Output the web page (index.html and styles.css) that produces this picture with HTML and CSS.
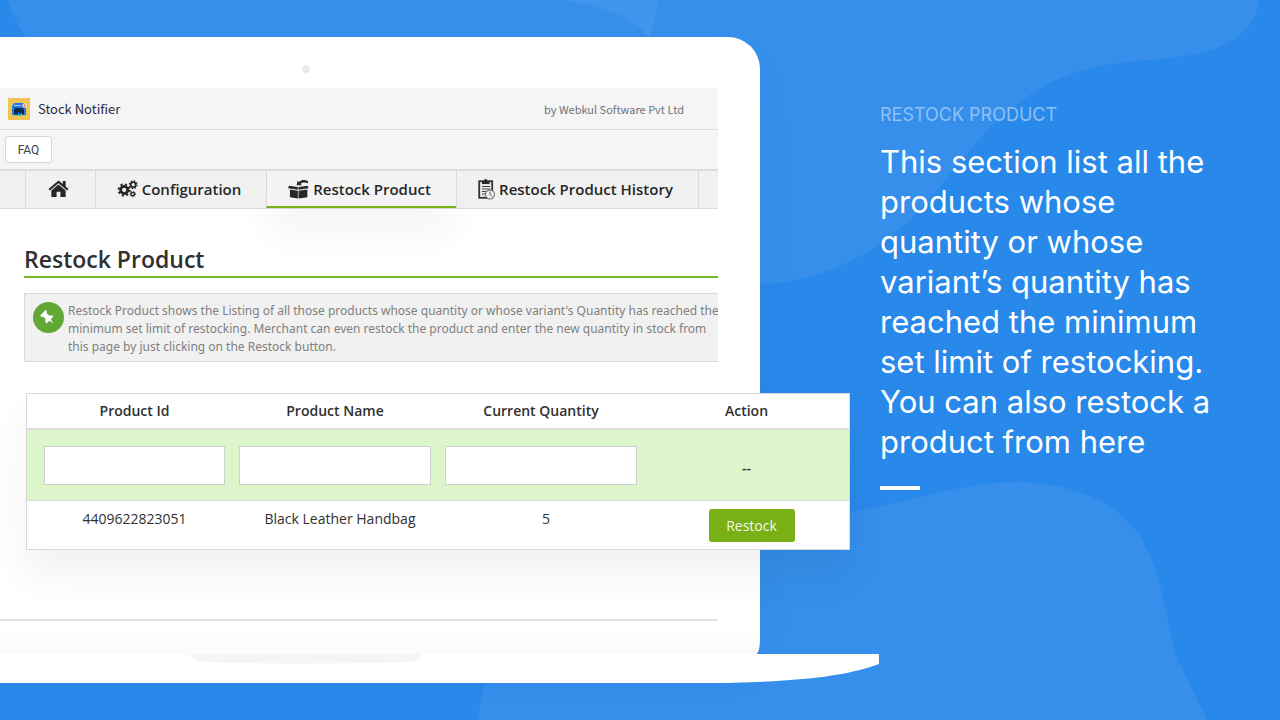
FILE: index.html
```html
<!DOCTYPE html>
<html lang="en">
<head>
<meta charset="utf-8">
<meta name="viewport" content="width=device-width, initial-scale=1">
<title>Stock Notifier – Restock Product</title>
<link rel="stylesheet" href="styles.css">
</head>
<body>
<div class="page">
  <svg class="backdrop" viewBox="0 0 1280 720" preserveAspectRatio="none" aria-hidden="true">
    <path class="blob" d="M8 0C14 16 20 28 28 44H646C654 28 657 12 657 0Z"/>
    <path class="blob" d="M565 0C605 8 635 16 648 37L700 285H760C828 279 884 252 926 203C968 154 1010 88 1090 68C1140 57 1190 62 1226 44C1252 29 1258 14 1259 0Z"/>
    <path class="blob" d="M478 720C480 702 483 688 488 670L700 530C850 520 900 500 960 488C1030 474 1100 485 1135 530C1164 568 1165 622 1178 660L1207 720Z"/>
  </svg>

  <main class="laptop">
    <div class="lid">
      <span class="camera"></span>
      <div class="app">
        <header class="app-header">
          <svg class="logo" viewBox="0 0 22 22" aria-hidden="true">
            <rect width="22" height="22" fill="#f0c452"/>
            <path d="M4 8L6.500 5H15.500L18 8V17H4Z" fill="#1f78ee"/>
            <path d="M6 17V12Q6 10 8 10H14Q16 10 16 12V17H14V15H12V17H11V14H10V17Z" fill="#10263f"/>
            <path d="M6 17H17" stroke="#25b8c8" stroke-width="1"/>
            <path d="M6 7.500H13" stroke="#9cc8ff" stroke-width="1"/>
            <circle cx="16.500" cy="7.500" r="2.200" fill="#f8dedb"/>
            <circle cx="16.500" cy="7.500" r="1" fill="#ea5959"/>
          </svg>
          <span class="app-name">Stock Notifier</span>
          <span class="vendor">by Webkul Software Pvt Ltd</span>
        </header>
        <div class="toolbar"><button class="faq" type="button">FAQ</button></div>
        <nav class="tabs">
          <a class="tab tab-home" href="#" aria-label="Home">
            <svg class="icon-home" viewBox="0 0 22 20"><path d="M11 1L0.500 10L2 11.600L11 4L20 11.600L21.500 10L18.500 7.400V1.500H15.500V4.800Z"/><path d="M11 5.400L3.500 11.700V18.500H9V13H13V18.500H18.500V11.700Z"/></svg>
          </a>
          <a class="tab tab-config" href="#">
            <svg class="icon" viewBox="0 0 22 20"><g fill="none" stroke="#272727"><circle cx="7.500" cy="11" r="3.700" stroke-width="3"/><circle cx="7.500" cy="11" r="5.900" stroke-width="2" stroke-dasharray="2.300 2.330"/><circle cx="17" cy="5.500" r="2.600" stroke-width="1.800"/><circle cx="17" cy="5.500" r="4" stroke-width="1.300" stroke-dasharray="1.570 1.570"/><circle cx="16.500" cy="15.300" r="1.800" stroke-width="1.500"/><circle cx="16.500" cy="15.300" r="2.900" stroke-width="1" stroke-dasharray="1.140 1.140"/></g></svg>
            Configuration
          </a>
          <a class="tab tab-active" href="#">
            <svg class="icon" viewBox="0 0 22 20"><path d="M1 6.500L10.300 8V10.800L0 9.300ZM11 8L20.500 6.500L21.500 9.300L11 10.800ZM2 10.500L10.300 11.800V20L2 18.700ZM11 11.800L20.300 10.500V18.700L11 20Z"/><path d="M9 6L10 1.500L11.500 2.700C14 0 18 0 21 1.800V4C17.500 2.600 15 3 13.200 4.500L14.500 6Z"/></svg>
            Restock Product
          </a>
          <a class="tab tab-history" href="#">
            <svg class="icon icon-clip" viewBox="0 0 17 22"><rect x="1.200" y="3.200" width="13" height="16.600" fill="#e8e8e8" stroke="#333" stroke-width="1.800"/><path d="M4 3.200H6Q6 1 7.700 1T9.500 3.200H11.500V6H4Z"/><path d="M4 8.500H12M4 11H12M4 13.500H9M4 16H8" stroke="#444" stroke-width="1"/><circle cx="12" cy="16.500" r="4.500" fill="#f4f4f4" stroke="#555" stroke-width="1"/><path d="M12 13.500V16.500L14 18.500" fill="none" stroke="#444" stroke-width="1"/></svg>
            Restock Product History
          </a>
        </nav>
        <section class="content">
          <h1 class="title">Restock Product</h1>
          <div class="notice">
            <svg class="pin" viewBox="0 0 32 32" aria-hidden="true"><circle cx="16" cy="16" r="16" fill="#62a834"/><path transform="translate(15.500 16.500) rotate(-45)" d="M-4 -7.500H4V-5.500L2.600 -4.800V-1L5 1V3H1L0 8L-1 3H-5V1L-2.600 -1V-4.800L-4 -5.500Z" fill="#fff"/></svg>
            <p class="notice-text">Restock Product shows the Listing of all those products whose quantity or whose variant's Quantity has reached the<br>minimum set limit of restocking. Merchant can even restock the product and enter the new quantity in stock from<br>this page by just clicking on the Restock button.</p>
          </div>
          <table class="products">
            <colgroup><col class="col-id"><col class="col-name"><col class="col-qty"><col class="col-action"></colgroup>
            <thead>
              <tr><th>Product Id</th><th>Product Name</th><th>Current Quantity</th><th>Action</th></tr>
            </thead>
            <tbody>
              <tr class="filters">
                <td><input type="text" aria-label="Product Id"></td>
                <td><input type="text" aria-label="Product Name"></td>
                <td><input type="text" aria-label="Current Quantity"></td>
                <td class="none">--</td>
              </tr>
              <tr class="item">
                <td>4409622823051</td>
                <td>Black Leather Handbag</td>
                <td>5</td>
                <td><button class="restock" type="button">Restock</button></td>
              </tr>
            </tbody>
          </table>
        </section>
      </div>
    </div>
    <svg class="base" viewBox="0 0 880 30" preserveAspectRatio="none" aria-hidden="true">
      <path d="M0 0H878Q879 0 879 1V10C850 21 800 29 700 29H0Z" fill="#fff"/>
      <path d="M190 0H422Q420 7 410 8Q306 11 202 8Q192 7 190 0Z" fill="#f5f5f5"/>
    </svg>
  </main>

  <aside class="copy">
    <h2 class="eyebrow">RESTOCK PRODUCT</h2>
    <p class="lead">This section list all the<br>products whose<br>quantity or whose<br>variant’s quantity has<br>reached the minimum<br>set limit of restocking.<br>You can also restock a<br>product from here</p>
    <span class="rule"></span>
  </aside>
</div>
</body>
</html>
```
FILE: styles.css
```css
* { box-sizing: border-box; }

body {
  margin: 0;
  font-family: "Open Sans", sans-serif;
  color: #303030;
}

.page {
  position: relative;
  display: grid;
  grid-template-columns: minmax(0, 11fr) minmax(0, 5fr);
  min-height: 100vh;
  overflow: hidden;
  background: #2989ea;
}

.backdrop {
  position: absolute;
  inset: 0;
  width: 100%;
  height: 100%;
}

.blob { fill: rgba(255, 255, 255, 0.06); }

.laptop {
  position: relative;
  padding-top: 37px;
}

.lid {
  display: flex;
  flex-direction: column;
  min-height: 617px;
  margin-right: 120px;
  padding: 28px 42px 33px 0;
  border-radius: 0 32px 0 0;
  border-bottom-right-radius: 4px 14px;
  background: linear-gradient(#fff 95%, #fafafa);
  box-shadow: 0 20px 40px rgba(0, 0, 0, 0.04);
}

.camera {
  width: 8px;
  height: 8px;
  margin: 0 0 15px 302px;
  border-radius: 50%;
  background: #ebebeb;
}

.app {
  flex: 1;
  border-bottom: 2px solid #e0e2e2;
}

.app-header {
  display: flex;
  align-items: center;
  height: 42px;
  padding: 0 34px 0 8px;
  border-bottom: 1px solid #dcdcdc;
  background: #f5f5f5;
  font-family: "Noto Sans CJK SC", sans-serif;
}

.logo {
  width: 22px;
  height: 22px;
  margin-right: 8px;
}

.app-name {
  font-size: 13px;
  color: #2a2a42;
}

.vendor {
  margin-left: auto;
  font-size: 11px;
  color: #6f7277;
}

.toolbar {
  display: flex;
  align-items: center;
  height: 39px;
  padding-left: 5px;
  background: #f5f5f5;
}

.faq {
  width: 47px;
  height: 27px;
  padding: 0;
  border: 1px solid #d6d8db;
  border-radius: 3px;
  background: #fff;
  font-family: Roboto, sans-serif;
  font-size: 12px;
  color: #404040;
}

.tabs {
  display: flex;
  height: 40px;
  padding-left: 25px;
  border-top: 2px solid #dddddd;
  border-bottom: 1px solid #dcdcdc;
  background: #f1f1f1;
}

.tab {
  display: flex;
  align-items: center;
  justify-content: center;
  gap: 4px;
  padding: 0 4px 2px 0;
  border-left: 1px solid #d9d9d9;
  font-size: 15px;
  font-weight: 600;
  white-space: nowrap;
  text-decoration: none;
  color: #272727;
}

.tab-home { width: 70px; }
.tab-config { width: 171px; }
.tab-active {
  width: 190px;
  padding-bottom: 0;
  border-bottom: 2px solid #79b016;
  background: #f4f4f4;
  box-shadow: 0 28px 32px rgba(0, 0, 0, 0.04);
}
.tab-history {
  width: 243px;
  border-right: 1px solid #d9d9d9;
}

.icon,
.icon-home {
  width: 21px;
  height: 20px;
  fill: #272727;
}

.icon-clip { width: 17px; height: 22px; }

.content { padding-left: 24px; }

.title {
  margin: 0 0 15px;
  padding-top: 33px;
  border-bottom: 2px solid #79b523;
  font-size: 23px;
  font-weight: 600;
  line-height: 34px;
}

.notice {
  display: flex;
  gap: 4px;
  overflow: hidden;
  padding: 8px 0 5px 8px;
  border: 1px solid #d8d8d8;
  border-right: 0;
  background: #f1f1f1;
}

.pin {
  flex: none;
  width: 31px;
  height: 31px;
}

.notice-text {
  margin: 0;
  font-family: "Noto Sans", sans-serif;
  font-size: 12px;
  line-height: 18px;
  white-space: nowrap;
  color: #808080;
}

.products {
  position: relative;
  width: calc(100% + 130px);
  margin: 31px 0 0 2px;
  border: 1px solid #d8d8d8;
  border-collapse: separate;
  border-spacing: 0;
  table-layout: fixed;
  background: #fff;
  box-shadow: 0 24px 40px rgba(0, 0, 0, 0.06);
  font-size: 14px;
  text-align: center;
}

.col-id { width: 205px; }
.col-name { width: 206px; }
.col-qty { width: 206px; }

.products th {
  height: 36px;
  padding: 0 0 2px;
  border-bottom: 2px solid #dcdcdc;
  font-weight: 600;
}

.products th:first-child { padding-left: 10px; }

.products td { padding: 0; }

.products .filters td {
  height: 71px;
  padding: 0 7px;
  border-bottom: 1px solid #dcdcdc;
  background: #ddf5cb;
}

.products .filters td:first-child { padding-left: 17px; }

.filters input {
  display: block;
  width: 100%;
  height: 39px;
  padding: 0 8px;
  border: 1px solid #cfd2cc;
  background: #fff;
  font: inherit;
}

.products .filters .none { padding-top: 4px; font-weight: 600; }

.products .item td {
  height: 48px;
  padding: 8px 0 0 10px;
  line-height: 20px;
  vertical-align: top;
}

.restock {
  width: 86px;
  height: 33px;
  padding: 0;
  border: 0;
  border-radius: 3px;
  background: #79b016;
  font: 14px "Open Sans", sans-serif;
  color: #f2f8e6;
}

.base {
  position: relative;
  display: block;
  width: 100%;
  height: 30px;
}

.copy {
  position: relative;
  padding-top: 104px;
  font-family: Inter, sans-serif;
  color: #fff;
}

.eyebrow {
  margin: 0 0 16px;
  font-size: 18px;
  font-weight: 400;
  line-height: 22px;
  color: #8fc1f5;
}

.lead {
  margin: 0;
  font-size: 31px;
  font-weight: 400;
  line-height: 40px;
  white-space: nowrap;
}

.rule {
  display: block;
  width: 40px;
  height: 4px;
  margin-top: 24px;
  background: #fff;
}
```
